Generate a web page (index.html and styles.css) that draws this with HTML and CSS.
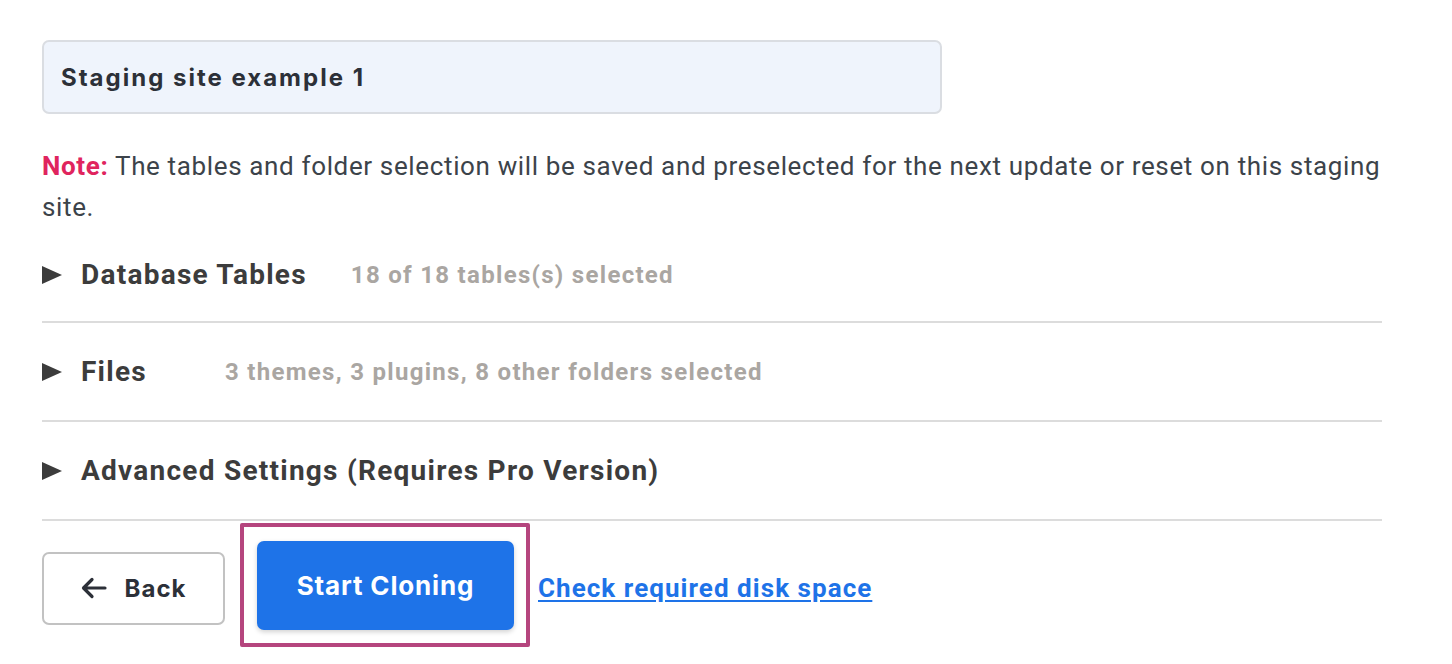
FILE: index.html
```html
<!DOCTYPE html>
<html>
<head>
<meta charset="utf-8">
<link rel="stylesheet" href="styles.css">
</head>
<body>
<div class="page">
  <div class="name-input">Staging site example 1</div>
  <p class="note"><span class="note-label">Note:</span> The tables and folder selection will be saved and preselected for the next update or reset on this staging site.</p>
  <div class="section section-first">
    <span class="tri"></span>
    <span class="sec-title">Database Tables</span>
    <span class="sec-sub">18 of 18 tables(s) selected</span>
  </div>
  <div class="section section-files">
    <span class="tri"></span>
    <span class="sec-title">Files</span>
    <span class="sec-sub">3 themes, 3 plugins, 8 other folders selected</span>
  </div>
  <div class="section">
    <span class="tri"></span>
    <span class="sec-title">Advanced Settings (Requires Pro Version)</span>
  </div>
  <div class="actions">
    <button class="btn-back">
      <svg class="arrow" width="26" height="22" viewBox="0 0 26 22"><path d="M24 11H3M11 2.5L2.5 11L11 19.5" fill="none" stroke="#2c3038" stroke-width="3.2" stroke-linecap="round" stroke-linejoin="round"/></svg>
      <span>Back</span>
    </button>
    <div class="highlight">
      <button class="btn-start">Start Cloning</button>
    </div>
    <a class="disk-link" href="#">Check required disk space</a>
  </div>
</div>
</body>
</html>
```

FILE: styles.css
```css
html, body {
  margin: 0;
  padding: 0;
  background: #ffffff;
}
.page {
  padding: 40px 0 0 42px;
  width: 1340px;
  font-family: Roboto, "Liberation Sans", sans-serif;
}
.name-input {
  box-sizing: border-box;
  width: 900px;
  height: 74px;
  background: #eff4fc;
  border: 2px solid #dadde2;
  border-radius: 7px;
  padding-left: 17px;
  display: flex;
  align-items: center;
  font-family: Inter, "Noto Sans", sans-serif;
  font-weight: 700;
  font-size: 24px;
  letter-spacing: 2px;
  color: #2c3038;
}
.note {
  margin: 32px -14px 0 0;
  font-size: 26px;
  line-height: 41px;
  letter-spacing: 0.64px;
  color: #3c434a;
}
.note-label {
  color: #e0245e;
  font-weight: 700;
}
.section {
  box-sizing: border-box;
  height: 99px;
  border-bottom: 2px solid #dcdcdc;
  display: flex;
  align-items: center;
}
.section-first {
  height: 95px;
}
.tri {
  flex: none;
  width: 0;
  height: 0;
  border-top: 9.5px solid transparent;
  border-bottom: 9.5px solid transparent;
  border-left: 20px solid #3c3c3c;
  margin-right: 19px;
}
.sec-title {
  font-size: 28px;
  font-weight: 700;
  letter-spacing: 1.25px;
  color: #3c3c3c;
}
.sec-sub {
  margin-left: 44px;
  font-size: 24px;
  font-weight: 700;
  letter-spacing: 1.3px;
  color: #aaa6a2;
}
.section-files .sec-sub {
  margin-left: 78px;
}
.actions {
  display: flex;
  align-items: center;
  margin-top: 2px;
}
.btn-back {
  box-sizing: border-box;
  width: 183px;
  height: 73px;
  background: #ffffff;
  border: 2px solid #c2c2c2;
  border-radius: 7px;
  display: flex;
  align-items: center;
  justify-content: center;
  gap: 18px;
  font-family: Inter, "Noto Sans", sans-serif;
  font-weight: 700;
  font-size: 24px;
  letter-spacing: 1px;
  color: #2c3038;
  padding: 0;
  margin: 6px 15px 0 0;
}
.highlight {
  box-sizing: border-box;
  width: 290px;
  height: 124px;
  border: 4px solid #b5457e;
  border-radius: 2px;
  padding: 14px 12px 12px 13px;
  margin-right: 8px;
}
.btn-start {
  width: 257px;
  height: 89px;
  background: #1e73e8;
  border: none;
  border-radius: 7px;
  box-shadow: 0 2px 5px rgba(0, 0, 0, 0.18);
  color: #ffffff;
  font-family: Inter, "Noto Sans", sans-serif;
  font-weight: 700;
  font-size: 26px;
  letter-spacing: 0.85px;
  padding: 0;
}
.disk-link {
  margin-top: 6px;
  font-size: 26px;
  font-weight: 700;
  letter-spacing: 1.05px;
  color: #1e73e8;
  text-decoration: underline;
  text-underline-offset: 3px;
}
```
